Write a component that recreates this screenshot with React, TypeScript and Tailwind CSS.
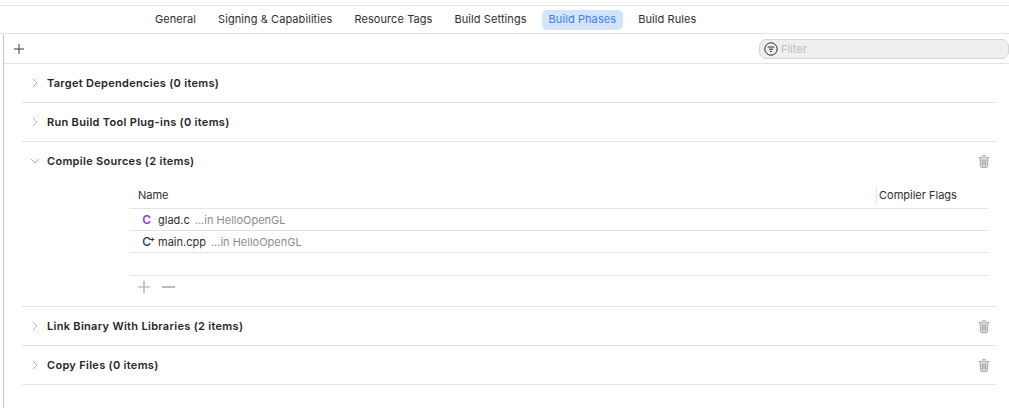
import React from "react";

const Chevron = ({ open }: { open?: boolean }) => (
  <svg width="10" height="10" viewBox="0 0 10 10" fill="none" stroke="#b4b4b4" strokeWidth="1" strokeLinecap="round" strokeLinejoin="round">
    {open ? <path d="M1 3 L5 7 L9 3" /> : <path d="M3 1 L7 5 L3 9" />}
  </svg>
);

const Trash = () => (
  <svg width="12" height="13" viewBox="0 0 12 13" fill="none" stroke="#a3a3a3" strokeWidth="1">
    <path d="M0.8 2.5 H11.2" />
    <path d="M4 2.3 V1.4 Q4 0.7 4.7 0.7 H7.3 Q8 0.7 8 1.4 V2.3" />
    <path d="M2 2.6 L2.6 11.6 Q2.7 12.4 3.5 12.4 H8.5 Q9.3 12.4 9.4 11.6 L10 2.6" fill="#e2e2e2" />
    <path d="M4.4 4.4 V10.6 M6 4.4 V10.6 M7.6 4.4 V10.6" />
  </svg>
);

const Section = ({ title, open, trash, children }: { title: string; open?: boolean; trash?: boolean; children?: React.ReactNode }) => (
  <div className="border-b border-[#e5e5e5]">
    <div className="h-[38px] flex items-center">
      <div className="w-[25px] flex justify-center pl-[1px]">
        <Chevron open={open} />
      </div>
      <span className="font-semibold text-[11px] text-[#262626] tracking-[0.3px]">{title}</span>
      {trash && (
        <div className="ml-auto mr-[6px] flex">
          <Trash />
        </div>
      )}
    </div>
    {children}
  </div>
);

const Tab = ({ label, active }: { label: string; active?: boolean }) => (
  <div className={`h-[20px] px-[7px] rounded-[5px] flex items-center text-[11px] tracking-[0.08px] ${active ? "bg-[#d3e4fd] text-[#3c7ff0]" : "text-[#2e2e2e]"}`}>
    {label}
  </div>
);

const Row = ({ icon, name, path }: { icon: React.ReactNode; name: string; path: string }) => (
  <div className="h-[22px] border-b border-[#e5e5e5] flex items-center text-[11px] pt-[1px]">
    <div className="w-[28px] flex justify-end pr-[7px]">{icon}</div>
    <span className="text-[#2e2e2e]">{name}</span>
    <span className="ml-[5px] text-[#8c8c8c]">{path}</span>
  </div>
);

export default function App() {
  return (
    <div className="w-[1009px] h-[408px] bg-white overflow-hidden" style={{ fontFamily: "Inter, 'Liberation Sans', sans-serif" }}>
      <div className="h-[5px]" />
      <div className="h-[29px] border-y border-[#e5e5e5] flex items-center gap-2 pl-[148px]">
        <Tab label="General" />
        <Tab label="Signing & Capabilities" />
        <Tab label="Resource Tags" />
        <Tab label="Build Settings" />
        <Tab label="Build Phases" active />
        <Tab label="Build Rules" />
      </div>
      <div className="ml-[3px] border-l border-[#c4c4c4] h-[374px]">
        <div className="h-[30px] border-b border-[#e5e5e5] flex items-center pl-[10px] pr-0 justify-between">
          <svg width="10" height="10" viewBox="0 0 10 10" stroke="#3d3d3d" strokeWidth="1">
            <path d="M5 0 V10 M0 5 H10" />
          </svg>
          <div className="w-[250px] h-[20px] rounded-[7px] bg-[#efefef] border border-[#d6d6d6] flex items-center pl-[4px] gap-[3px]">
            <svg width="14" height="14" viewBox="0 0 14 14" fill="none" stroke="#2a2a2a" strokeWidth="1">
              <circle cx="7" cy="7" r="6.2" />
              <path d="M3.6 5 H10.4 M4.9 7.2 H9.1 M6 9.4 H8" />
            </svg>
            <span className="text-[11px] text-[#bdbdbd] pt-[1px]">Filter</span>
          </div>
        </div>
        <div className="ml-[18px] w-[974px]">
          <Section title="Target Dependencies (0 items)" />
          <Section title="Run Build Tool Plug-ins (0 items)" />
          <Section title="Compile Sources (2 items)" open trash>
            <div className="ml-[108px] w-[858px] pb-[2px]">
              <div className="h-[29px] border-b border-[#e5e5e5] flex items-center text-[11px] text-[#2e2e2e] pt-[2px]">
                <span className="pl-[8px] w-[746px]">Name</span>
                <span className="border-l border-[#e5e5e5] h-[18px] flex items-center pl-[2px]">Compiler Flags</span>
              </div>
              <Row icon={<span className="font-semibold text-[12px] leading-none text-[#8a3ee8]">C</span>} name="glad.c" path="...in HelloOpenGL" />
              <Row
                icon={
                  <span className="relative font-medium text-[12px] leading-none text-[#1c3559]">
                    C<span className="absolute -right-[4px] -top-[1px] font-bold text-[8px] leading-none">+</span>
                  </span>
                }
                name="main.cpp"
                path="...in HelloOpenGL"
              />
              <div className="h-[23px] border-b border-[#e5e5e5]" />
              <div className="h-[22px] flex items-center pl-[7px] gap-[11px]">
                <svg width="14" height="14" viewBox="0 0 14 14" stroke="#a3a3a3" strokeWidth="1.2">
                  <path d="M7 0.5 V13.5 M0.5 7 H13.5" />
                </svg>
                <div className="w-[13px] h-[2px] bg-[#bcbcbc]" />
              </div>
            </div>
            <div className="h-[6px]" />
          </Section>
          <Section title="Link Binary With Libraries (2 items)" trash />
          <Section title="Copy Files (0 items)" trash />
        </div>
      </div>
    </div>
  );
}
